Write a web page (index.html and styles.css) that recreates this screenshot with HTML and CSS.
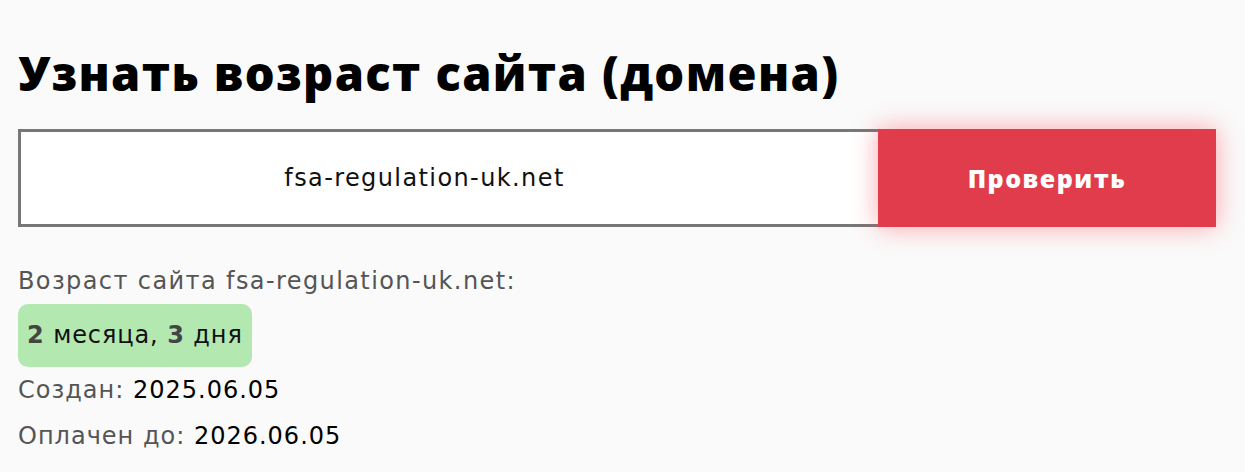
FILE: index.html
```html
<!DOCTYPE html>
<html lang="ru">
<head>
<meta charset="utf-8">
<link rel="stylesheet" href="styles.css">
</head>
<body>
<main class="page">
  <h1 class="title">Узнать возраст сайта (домена)</h1>
  <form class="check">
    <div class="check-input">fsa-regulation-uk.net</div>
    <button class="check-btn" type="button">Проверить</button>
  </form>
  <div class="result">
    <p class="result-label">Возраст сайта fsa-regulation-uk.net:</p>
    <div class="age"><b>2</b> месяца, <b>3</b> дня</div>
    <p class="row">Создан: <span class="val">2025.06.05</span></p>
    <p class="row">Оплачен до: <span class="val">2026.06.05</span></p>
  </div>
</main>
</body>
</html>
```
FILE: styles.css
```css
html, body {
  margin: 0;
  padding: 0;
  background: #fafafa;
}
body {
  font-family: "DejaVu Sans", "Open Sans", sans-serif;
  color: #000;
}
.page {
  width: 1198px;
  padding: 0 0 0 18px;
}
.title {
  margin: 0;
  padding-top: 40px;
  font-family: "Open Sans", sans-serif;
  font-size: 47px;
  line-height: 66px;
  font-weight: 800;
  letter-spacing: 1.4px;
}
.check {
  display: flex;
  margin-top: 23px;
  height: 98px;
}
.check-input {
  flex: 1;
  box-sizing: border-box;
  border: 3px solid #777;
  border-right: none;
  background: #fff;
  display: flex;
  align-items: center;
  justify-content: center;
  padding-right: 50px;
  font-size: 24px;
  letter-spacing: 1.4px;
  color: #111;
}
.check-btn {
  width: 338px;
  border: none;
  background: #e03c4c;
  color: #fff;
  font-family: "Open Sans", sans-serif;
  font-weight: 800;
  font-size: 25px;
  letter-spacing: 1.5px;
  box-shadow: 0 0 24px rgba(255, 60, 70, 0.45);
  padding: 0;
}
.result {
  margin-top: 39px;
}
.result-label {
  margin: 0;
  font-size: 24px;
  letter-spacing: 1.4px;
  line-height: 30px;
  color: #555;
}
.age {
  display: inline-block;
  margin-top: 8px;
  padding: 0 9px;
  height: 63px;
  line-height: 63px;
  box-sizing: border-box;
  background: #b3e8b0;
  border-radius: 10px;
  font-size: 24px;
  letter-spacing: 0.9px;
  color: #111;
}
.age b {
  color: #444;
}
.row {
  margin: 0;
  font-size: 24px;
  letter-spacing: 1px;
  line-height: 46px;
  color: #555;
}
.row .val {
  color: #000;
}
```
